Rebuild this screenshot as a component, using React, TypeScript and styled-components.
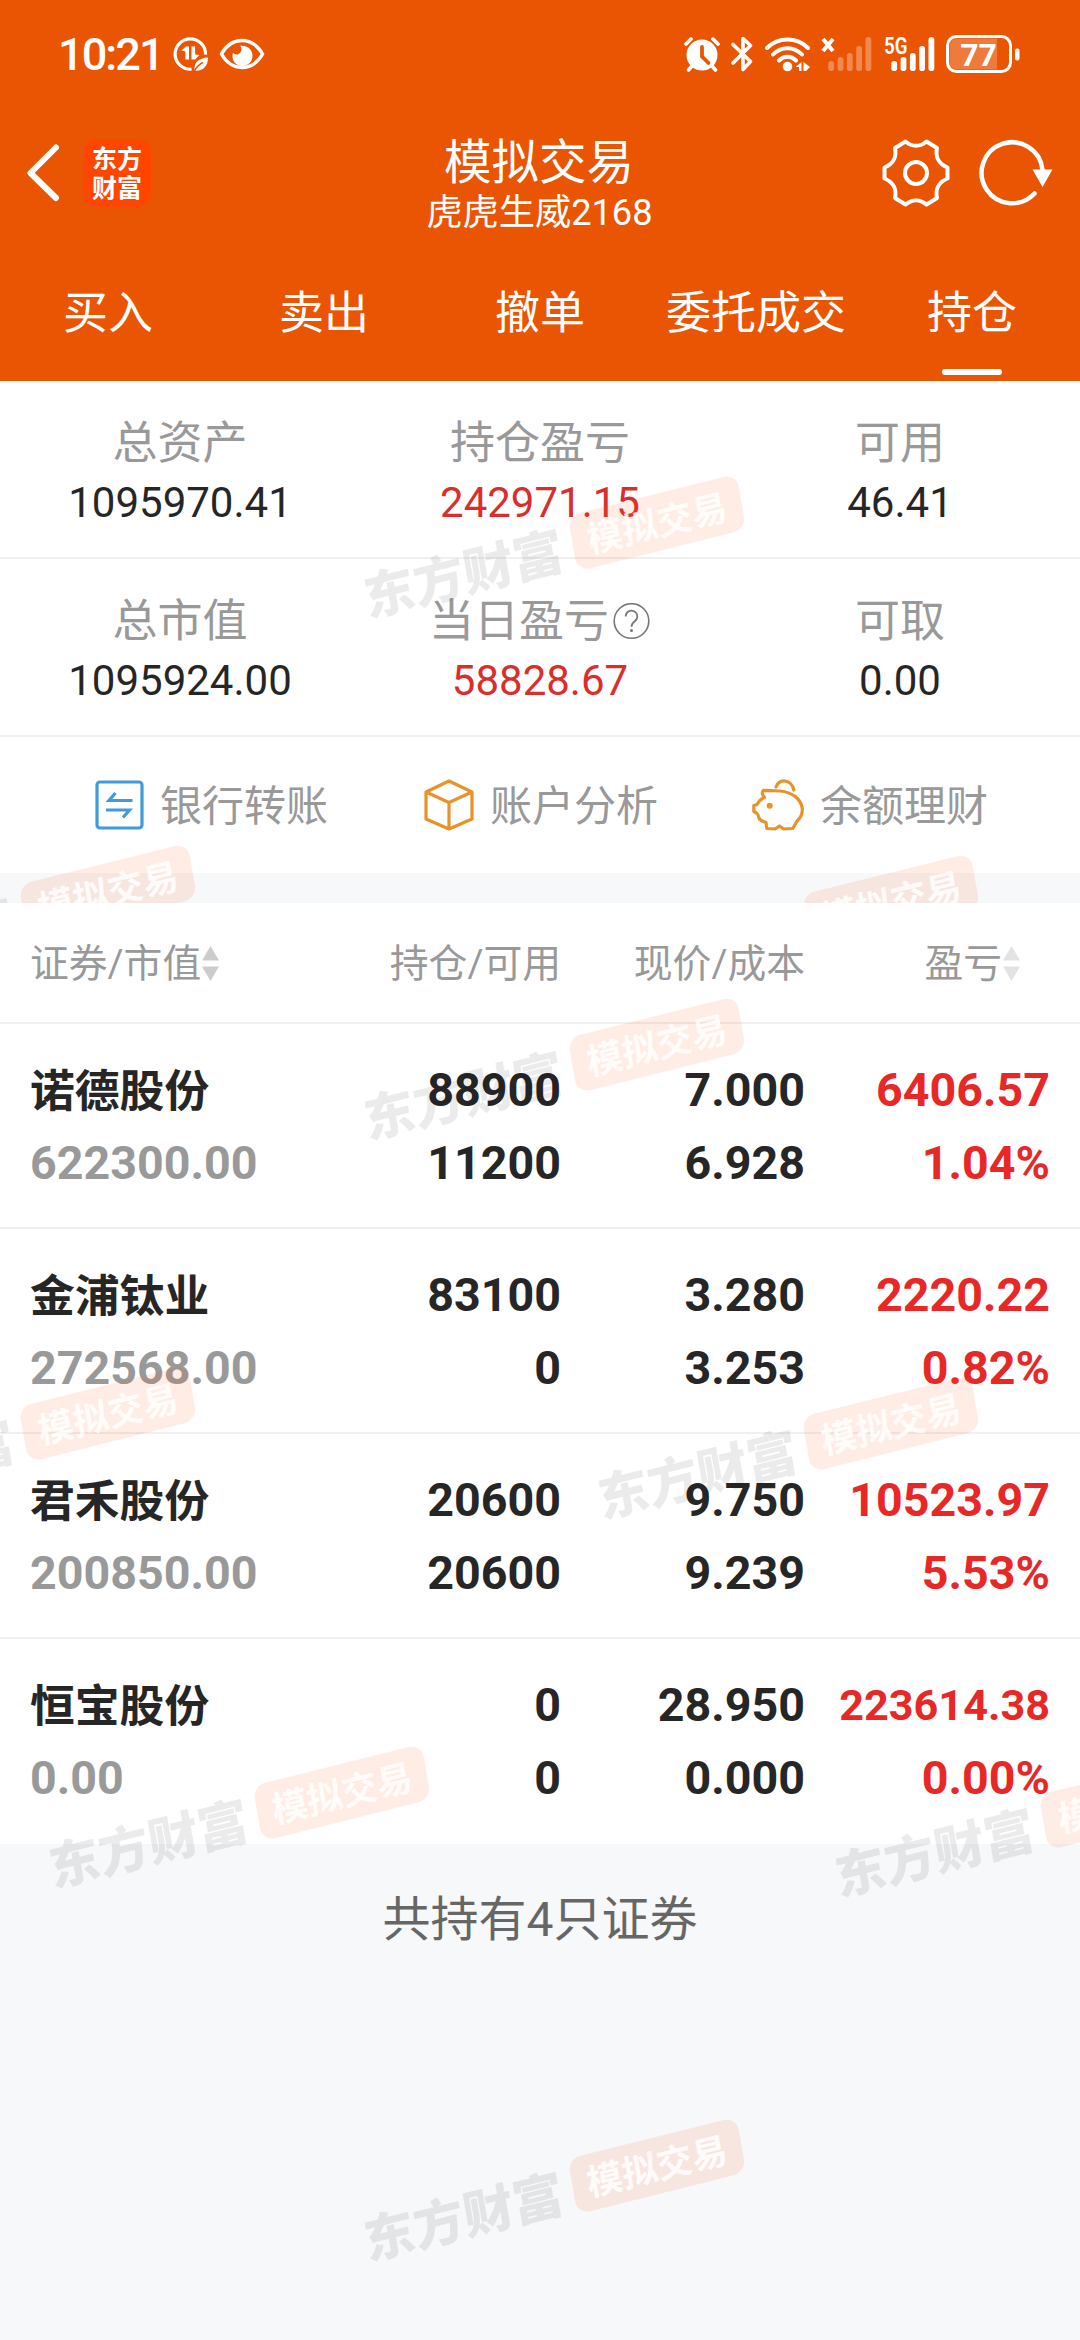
import React from "react";
import styled, { createGlobalStyle } from "styled-components";

const GlobalStyle = createGlobalStyle`
  * { box-sizing: border-box; }
  body {
    margin: 0;
    background: #f7f8fa;
    font-family: Roboto, "Noto Sans CJK SC", sans-serif;
    -webkit-font-smoothing: antialiased;
  }
`;

const Screen = styled.div`
  width: 1080px;
  height: 2340px;
  overflow: hidden;
  display: flex;
  flex-direction: column;
  background: #f7f8fa;
`;

const Header = styled.header`
  height: 381px;
  flex: none;
  background: #ea5504;
  color: #fff;
  display: flex;
  flex-direction: column;
`;

const StatusBar = styled.div`
  height: 108px;
  padding: 0 60px 0 58px;
  display: flex;
  align-items: center;
  justify-content: space-between;
`;

const StatusGroup = styled.div<{ $gap: number }>`
  display: flex;
  align-items: center;
  gap: ${(p) => p.$gap}px;
`;

const Clock = styled.span`
  font-size: 45px;
  font-weight: 500;
  line-height: 60px;
  letter-spacing: -1.9px;
  padding-top: 2px;
`;

const NavBar = styled.div`
  height: 134px;
  display: grid;
  grid-template-columns: 1fr auto 1fr;
  align-items: start;
  padding: 0 27px 0 25px;
`;

const NavSide = styled.div<{ $end?: boolean }>`
  display: flex;
  align-items: center;
  height: 129px;
  gap: ${(p) => (p.$end ? 29 : 22)}px;
  justify-content: ${(p) => (p.$end ? "flex-end" : "flex-start")};
`;

const BrandTile = styled.div`
  width: 68px;
  height: 68px;
  border-radius: 14px;
  background: #ff4600;
  padding: 4px 9px;
  font-family: "Noto Sans CJK SC", sans-serif;
  font-size: 25px;
  font-weight: 700;
  line-height: 29px;
  word-break: break-all;
`;

const TitleBlock = styled.div`
  text-align: center;
  padding-top: 25px;
`;

const Title = styled.div`
  font-size: 47.5px;
  line-height: 60px;
`;

const Subtitle = styled.div`
  font-size: 36.2px;
  line-height: 40px;
  padding-left: 1px;
`;

const Tabs = styled.nav`
  display: grid;
  grid-template-columns: repeat(5, 1fr);
  height: 139px;
`;

const Tab = styled.div<{ $active?: boolean }>`
  display: flex;
  flex-direction: column;
  align-items: center;
  justify-content: space-between;
  font-size: 45px;
  line-height: 60px;
  padding: 42px 0 6px;
  &::after {
    content: "";
    width: 60px;
    height: 6px;
    border-radius: 3px;
    background: ${(p) => (p.$active ? "#fff" : "transparent")};
  }
`;

const Panel = styled.section<{ $grow?: boolean }>`
  position: relative;
  overflow: hidden;
  flex: ${(p) => (p.$grow ? "1" : "none")};
  height: ${(p) => (p.$grow ? "auto" : "522px")};
`;

const StatRow = styled.div`
  display: grid;
  grid-template-columns: repeat(3, 360px);
  height: 178px;
  background: #fff;
  border-bottom: 2px solid #f0f0f0;
  padding-top: 33px;
`;

const Stat = styled.div`
  display: flex;
  flex-direction: column;
  align-items: center;
`;

const StatLabel = styled.div`
  display: flex;
  align-items: center;
  gap: 4px;
  font-size: 45px;
  line-height: 60px;
  color: #999;
`;

const StatValue = styled.div<{ $up?: boolean }>`
  font-size: 42px;
  line-height: 58px;
  color: ${(p) => (p.$up ? "#d92f2c" : "#262626")};
`;

const Actions = styled.div`
  display: grid;
  grid-template-columns: 94px 330px 328px 1fr;
  height: 136px;
  background: #fff;
  &::before { content: ""; }
`;

const Action = styled.div`
  display: flex;
  align-items: center;
  gap: 14px;
  color: #999;
`;

const ActionLabel = styled.span`
  font-size: 42px;
  line-height: 60px;
  padding-top: 3px;
`;

const columns = "250px 281px 244px 245px";

const TableHead = styled.div`
  display: grid;
  grid-template-columns: ${columns};
  height: 121px;
  padding: 2px 30px 0;
  align-items: center;
  background: #fff;
  border-bottom: 2px solid #f0f0f0;
  font-size: 38.8px;
  line-height: 50px;
  color: #999;
`;

const HeadCell = styled.div<{ $right?: boolean; $sort?: boolean }>`
  display: flex;
  align-items: center;
  gap: 1px;
  justify-content: ${(p) => (p.$right ? "flex-end" : "flex-start")};
  padding-right: ${(p) => (p.$sort ? 30 : 0)}px;
  white-space: nowrap;
`;

const Row = styled.div`
  display: grid;
  grid-template-columns: ${columns};
  grid-template-rows: 73px 73px;
  height: 205px;
  padding: 30px 30px 0;
  background: #fff;
  border-bottom: 2px solid #f0f0f0;
  font-size: 46.6px;
  font-weight: 700;
  line-height: 73px;
  color: #262626;
  &:last-of-type { border-bottom: 0; }
`;

const Name = styled.div`
  font-size: 44.8px;
  padding-top: 1px;
`;

const Cell = styled.div<{ $tone?: "muted" | "up"; $left?: boolean; $tight?: boolean }>`
  text-align: ${(p) => (p.$left ? "left" : "right")};
  white-space: nowrap;
  font-size: ${(p) => (p.$tight ? "43.2px" : "inherit")};
  color: ${(p) => (p.$tone === "muted" ? "#999" : p.$tone === "up" ? "#e82827" : "#262626")};
`;

const Rows = styled.div``;

const Footer = styled.div`
  text-align: center;
  padding-top: 44px;
  font-size: 48px;
  line-height: 64px;
  color: #666;
`;

const MarkLayer = styled.div`
  position: absolute;
  inset: 0;
  pointer-events: none;
`;

const Mark = styled.div<{ $x: number; $y: number }>`
  position: absolute;
  left: ${(p) => p.$x}px;
  top: ${(p) => p.$y}px;
  display: flex;
  align-items: center;
  gap: 11px;
  transform-origin: 0 0;
  transform: rotate(-14deg) skewX(-4deg);
  white-space: nowrap;
`;

const MarkBrand = styled.span`
  font-family: "Noto Sans CJK SC", sans-serif;
  font-size: 51px;
  line-height: 56px;
  font-weight: 900;
  color: rgba(0, 0, 0, 0.08);
`;

const MarkBadge = styled.span`
  width: 174px;
  height: 56px;
  border-radius: 13px;
  background: rgba(255, 90, 20, 0.11);
  color: rgba(255, 255, 255, 0.85);
  font-family: "Noto Sans CJK SC", sans-serif;
  font-size: 36px;
  font-weight: 700;
  line-height: 53px;
  text-align: center;
`;

const DataSaverIcon = () => (
  <svg width="36" height="36" viewBox="0 0 36 36" fill="none">
    <path d="M18.500 33.200A15.200 15.200 0 1 1 32.500 18.600" stroke="#fff" strokeWidth="3.200" />
    <path d="M8.500 14.500l4.500-4h3v13h-3.600v-8zM18.500 10.500h3.600v8l4.400.5-4.500 4.500h-3.500z" fill="#fff" />
    <path d="M35 21.500c-8 .5-14.500 4-13.500 13 7.500 1 13.500-3.500 13.500-13z" fill="#fff" />
    <path d="M21.500 35c2-4 5-7 8.500-8.500" stroke="#ea5504" strokeWidth="1.500" />
  </svg>
);

const EyeIcon = () => (
  <svg width="46" height="34" viewBox="0 0 48 34" fill="none">
    <path d="M2.500 17C8 7.500 15.500 3 24 3s16 4.500 21.500 14C40 26.500 32.500 31 24 31S8 26.500 2.500 17z" stroke="#fff" strokeWidth="3.600" strokeLinejoin="round" />
    <path d="M22 8.500c2.500 3 1.500 7-1.500 8.500-2.500 1.200-5 .3-6-1.500C12.500 24 17.500 29.500 24 29.500c6.500 0 11-5 11-10.800C35 12 29 7.500 22 8.500z" fill="#fff" />
  </svg>
);

const AlarmIcon = () => (
  <svg width="36" height="36" viewBox="0 0 36 36" fill="none">
    <circle cx="18" cy="19" r="15.500" fill="#fff" />
    <path d="M8 30l-3.500 4M28 30l3.500 4M2 8l5-5M34 8l-5-5" stroke="#fff" strokeWidth="3.600" strokeLinecap="round" />
    <path d="M18 11v9.500l6.500 6.500" stroke="#ea5504" strokeWidth="3.800" strokeLinecap="round" />
  </svg>
);

const BluetoothIcon = () => (
  <svg width="22" height="36" viewBox="0 0 22 36" fill="none">
    <path d="M2 8.500l17.500 17L12 33.500V2.500l7.500 7L2 27" stroke="#fff" strokeWidth="3.600" strokeLinejoin="round" strokeLinecap="round" />
  </svg>
);

const WifiIcon = () => (
  <svg width="45" height="36" viewBox="0 0 45 36" fill="none">
    <path d="M2 12C13 .5 32 .5 43 12M8 18.500c8-8.500 21-8.500 29 0M14 24.500c5-5 12-5 17 0" stroke="#fff" strokeWidth="4" strokeLinecap="round" />
    <circle cx="22.500" cy="30.500" r="4.800" fill="#fff" />
    <path d="M36.500 26v9h-2.500v-4h-3.500zM38.500 26l6.500 5-4 4h-2.500z" fill="#fff" />
  </svg>
);

const SignalIcon = ({ label, dim }: { label?: string; dim?: boolean }) => (
  <svg width="51" height="36" viewBox="0 0 51 36" fill="none">
    {label ? (
      <text x="0" y="18" fill="#fff" fontSize="24" fontWeight="600" textLength="23.500" lengthAdjust="spacingAndGlyphs">
        {label}
      </text>
    ) : (
      <path d="M2 3l10 12M12 3L2 15" stroke="#fff" strokeWidth="4" />
    )}
    {[25, 21, 17, 10, 1].map((y, i) => (
      <rect key={y} x={7.3 + i * 9.3} y={y} width="5.800" height={35 - y} rx="2.800" fill="#fff" opacity={dim ? 0.3 : 1} />
    ))}
  </svg>
);

const BatteryIcon = () => (
  <svg width="74" height="38" viewBox="0 0 74 38" fill="none">
    <path d="M11 3.500h40v31H11a7.500 7.500 0 0 1-7.500-7.500V11A7.500 7.500 0 0 1 11 3.500z" fill="#fff" opacity="0.220" />
    <rect x="1.500" y="1.500" width="63" height="35" rx="9" stroke="#fff" strokeWidth="3" />
    <rect x="69" y="13.500" width="4.500" height="12" rx="2" fill="#fff" />
    <text x="32.500" y="30.500" fill="#fff" fontSize="32" fontWeight="700" textAnchor="middle">77</text>
  </svg>
);

const BackIcon = () => (
  <svg width="36" height="58" viewBox="0 0 36 58" fill="none">
    <path d="M31 3.500L5.500 29 31 54" stroke="#fff" strokeWidth="6" strokeLinecap="round" strokeLinejoin="round" />
  </svg>
);

const GearIcon = () => (
  <svg width="68" height="68" viewBox="0 0 68 68" fill="none">
    <path d="M23.500 2.500C30 8 38 8 44.500 2.500L55 9C53 18 57 25 65.500 28.500V39.500C57 43 53 50 55 59L44.500 65.500C38 60 30 60 23.500 65.500L13 59C15 50 11 43 2.500 39.500V28.500C11 25 15 18 13 9Z" stroke="#fff" strokeWidth="4" strokeLinejoin="round" />
    <circle cx="34" cy="34" r="11" stroke="#fff" strokeWidth="4" />
  </svg>
);

const RefreshIcon = () => (
  <svg width="74" height="68" viewBox="0 0 74 68" fill="none">
    <path d="M55.500 54.500A30.500 30.500 0 1 1 63.500 31" stroke="#fff" strokeWidth="4.500" strokeLinecap="round" />
    <path d="M53.500 30.500h20L63.500 48z" fill="#fff" />
  </svg>
);

const HelpIcon = () => (
  <svg width="38" height="38" viewBox="0 0 38 38" fill="none">
    <circle cx="18.500" cy="18" r="17.300" stroke="#777" strokeWidth="1.600" />
    <path d="M12.700 13.500a5.800 5.800 0 1 1 9.300 4.500c-2.200 1.600-3.500 2.700-3.500 5.800" stroke="#777" strokeWidth="1.700" />
    <circle cx="18.500" cy="27.500" r="1.500" fill="#777" />
  </svg>
);

const TransferIcon = () => (
  <svg width="52" height="52" viewBox="0 0 52 52" fill="none">
    <rect x="3" y="3" width="45" height="46" rx="3" stroke="#3f9bdc" strokeWidth="3.200" />
    <path d="M38.500 21.500H15l6.500-7.500M12 31h23.500l-6.500 7.500" stroke="#3f9bdc" strokeWidth="3.200" />
  </svg>
);

const CubeIcon = () => (
  <svg width="52" height="52" viewBox="0 0 52 52" fill="none">
    <path d="M25 2L48 13v27L25 50 2 40V13zM2 13l23 10.500L48 13M25 23.500V50" stroke="#e8932a" strokeWidth="3.200" strokeLinejoin="round" />
  </svg>
);

const PiggyIcon = () => (
  <svg width="54" height="54" viewBox="0 0 54 54" fill="none">
    <path d="M12.500 19.500C10 17 9.500 14 11.500 12.300C17 12.300 23 12.800 28 13C40 14 49.500 21 50.300 31C50.500 36 48.500 39.500 46 42C43.500 44.500 43 48 40.500 50.500L31.500 51L27.500 48L23 51L15 50.500C14 49 14.500 46.500 14 44.500C11 43.500 7.500 42 7 40C6.500 38 6 36 4.500 35L1.800 33.500V27.500L5 26.500C6.500 24 9 20.500 12.500 19.500ZM24 9C27.500 .5 39 .5 41.800 12" stroke="#e8932a" strokeWidth="3.200" strokeLinejoin="round" strokeLinecap="round" />
    <circle cx="17.700" cy="27.700" r="3" fill="#e8932a" />
  </svg>
);

const SortIcon = ({ color }: { color: string }) => (
  <svg width="17" height="35" viewBox="0 0 17 35">
    <path d="M8.500 0L17 14.500H0zM8.500 35L17 20.500H0z" fill={color} />
  </svg>
);

type MarkPoint = { x: number; y: number };

const Watermarks = ({ points }: { points: MarkPoint[] }) => (
  <MarkLayer>
    {points.map((p) => (
      <Mark key={`${p.x}-${p.y}`} $x={p.x} $y={p.y}>
        <MarkBrand>东方财富</MarkBrand>
        <MarkBadge>模拟交易</MarkBadge>
      </Mark>
    ))}
  </MarkLayer>
);

const summaryMarks: MarkPoint[] = [
  { x: 359, y: 187 },
  { x: -190, y: 556 },
  { x: 593, y: 566 },
];

const listMarks: MarkPoint[] = [
  { x: 359, y: 187 },
  { x: -190, y: 556 },
  { x: 593, y: 566 },
  { x: 44, y: 935 },
  { x: 830, y: 944 },
  { x: 359, y: 1308 },
];

const tabs = ["买入", "卖出", "撤单", "委托成交", "持仓"];

const stats = [
  [
    { label: "总资产", value: "1095970.41" },
    { label: "持仓盈亏", value: "242971.15", up: true },
    { label: "可用", value: "46.41" },
  ],
  [
    { label: "总市值", value: "1095924.00" },
    { label: "当日盈亏", value: "58828.67", up: true, help: true },
    { label: "可取", value: "0.00" },
  ],
];

const holdings = [
  { name: "诺德股份", worth: "622300.00", held: "88900", free: "11200", price: "7.000", cost: "6.928", gain: "6406.57", rate: "1.04%" },
  { name: "金浦钛业", worth: "272568.00", held: "83100", free: "0", price: "3.280", cost: "3.253", gain: "2220.22", rate: "0.82%" },
  { name: "君禾股份", worth: "200850.00", held: "20600", free: "20600", price: "9.750", cost: "9.239", gain: "10523.97", rate: "5.53%" },
  { name: "恒宝股份", worth: "0.00", held: "0", free: "0", price: "28.950", cost: "0.000", gain: "223614.38", rate: "0.00%" },
];

export default function App() {
  return (
    <>
      <GlobalStyle />
      <Screen>
        <Header>
          <StatusBar>
            <StatusGroup $gap={10}>
              <Clock>10:21</Clock>
              <DataSaverIcon />
              <EyeIcon />
            </StatusGroup>
            <StatusGroup $gap={11.5}>
              <AlarmIcon />
              <BluetoothIcon />
              <WifiIcon />
              <SignalIcon dim />
              <SignalIcon label="5G" />
              <BatteryIcon />
            </StatusGroup>
          </StatusBar>
          <NavBar>
            <NavSide>
              <BackIcon />
              <BrandTile>东方财富</BrandTile>
            </NavSide>
            <TitleBlock>
              <Title>模拟交易</Title>
              <Subtitle>虎虎生威2168</Subtitle>
            </TitleBlock>
            <NavSide $end>
              <GearIcon />
              <RefreshIcon />
            </NavSide>
          </NavBar>
          <Tabs>
            {tabs.map((t) => (
              <Tab key={t} $active={t === "持仓"}>{t}</Tab>
            ))}
          </Tabs>
        </Header>

        <Panel>
          {stats.map((row, i) => (
            <StatRow key={i}>
              {row.map((s) => (
                <Stat key={s.label}>
                  <StatLabel>
                    {s.label}
                    {"help" in s && <HelpIcon />}
                  </StatLabel>
                  <StatValue $up={"up" in s}>{s.value}</StatValue>
                </Stat>
              ))}
            </StatRow>
          ))}
          <Actions>
            <Action><TransferIcon /><ActionLabel>银行转账</ActionLabel></Action>
            <Action><CubeIcon /><ActionLabel>账户分析</ActionLabel></Action>
            <Action><PiggyIcon /><ActionLabel>余额理财</ActionLabel></Action>
          </Actions>
          <Watermarks points={summaryMarks} />
        </Panel>

        <Panel $grow>
          <TableHead>
            <HeadCell>证券/市值<SortIcon color="#ccc" /></HeadCell>
            <HeadCell $right>持仓/可用</HeadCell>
            <HeadCell $right>现价/成本</HeadCell>
            <HeadCell $right $sort>盈亏<SortIcon color="#e3e3e3" /></HeadCell>
          </TableHead>
          <Rows>
            {holdings.map((h) => (
              <Row key={h.name}>
                <Name>{h.name}</Name>
                <Cell>{h.held}</Cell>
                <Cell>{h.price}</Cell>
                <Cell $tone="up" $tight={h.gain.length > 8}>{h.gain}</Cell>
                <Cell $tone="muted" $left>{h.worth}</Cell>
                <Cell>{h.free}</Cell>
                <Cell>{h.cost}</Cell>
                <Cell $tone="up">{h.rate}</Cell>
              </Row>
            ))}
          </Rows>
          <Footer>共持有4只证券</Footer>
          <Watermarks points={listMarks} />
        </Panel>
      </Screen>
    </>
  );
}
